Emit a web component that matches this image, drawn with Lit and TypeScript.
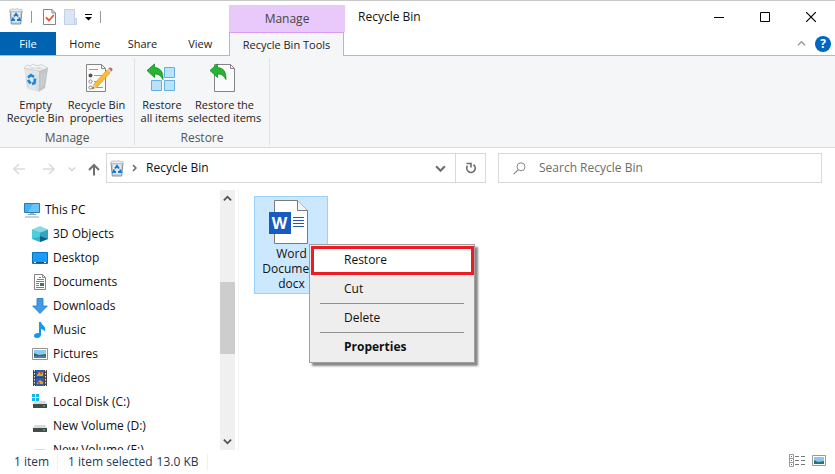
import { LitElement, html, css, svg, TemplateResult } from "lit";
import { customElement } from "lit/decorators.js";
import { classMap } from "lit/directives/class-map.js";

const icon = (w: number, h: number, body: unknown, vw = w, vh = h): TemplateResult =>
  html`<svg width=${w} height=${h} viewBox="0 0 ${vw} ${vh}" aria-hidden="true">${body}</svg>`;

const smallBin = icon(14, 17, svg`
  <path d="M1 2.500h12l-1.300 13.500H2.300z" fill="#c9cfd3" stroke="#8b9398"/>
  <path d="M1 1.500 4 .8l2 .6 2-.9 2 .8 3 .4v1.800H1z" fill="#e9ecee" stroke="#a9afb3" stroke-width=".6"/>
  <path d="M3 4.500h8V14H3z" fill="#dfe8ef"/>
  <path d="M5 8.500 7 5.800l2 2.700M10 9.500l1 2.500H8M6 12H3.200l1-2.500" fill="none" stroke="#187bd1" stroke-width="1.900"/>`);

const check = icon(13, 16, svg`
  <path d="M.5.5h8.500l3.500 3.500v11.500H.5z" fill="#fdfdfd" stroke="#858585"/>
  <path d="M9 .5V4h3.500" fill="none" stroke="#858585"/>
  <path d="m3 8.500 3 3L10.800 6" fill="none" stroke="#e8581c" stroke-width="1.800"/>`);

const folder = icon(13, 16, svg`
  <path d="M.5.5h10v9h2v6H.5z" fill="#dbe6f5" stroke="#c3d1e6"/>
  <path d="M10.500 9.500v6" stroke="#c3d1e6"/>`);

const customise = icon(7, 8, svg`<path d="M0 1.500h7" stroke="#000"/><path d="M0 4h7L3.500 7.500z" fill="#000"/>`);

const bigBin = icon(26, 30, svg`
  <path d="m1 5 15 3-.5 21L4 26z" fill="#e2e4e6"/>
  <path d="m16 8 9-3-3 20-6.500 4z" fill="#c0c4c7"/>
  <path d="M1 5 4 2l3 1 3-2 4 2 4-1.500L25 5l-9 3z" fill="#f4f5f6" stroke="#bfc3c6" stroke-width=".7"/>
  <path d="m5 5 4-1 3 1 4-1 5 1-5 1.500z" fill="#d9dcde"/>
  <path d="m3 14 2 11M14 12v15M19 10l-1 15M22 9l-2 14" stroke="#d3d6d8"/>
  <path d="m5 14.500 3-2.500 3 2" fill="none" stroke="#1687df" stroke-width="2.600"/>
  <path d="m12 15.500-.5 4.500-2.500 1M7.500 20.500 5 17" fill="none" stroke="#1687df" stroke-width="2.600"/>`);

const propertiesIcon = icon(32, 30, svg`
  <g transform="translate(4 0)">
  <path d="M1.500 1.500h15l4 4v23h-19z" fill="#fbfbfb" stroke="#858585"/>
  <path d="M16.500 1.500v4h4" fill="none" stroke="#858585"/>
  <path d="M4 6.500h9M9 12.500h8M9 18.500h6M9 24.500h9" stroke="#9b9b9b"/>
  <circle cx="5.500" cy="12.500" r="2" fill="#555"/>
  <circle cx="5.500" cy="18.500" r="1.600" fill="#fff" stroke="#888"/>
  <circle cx="5.500" cy="24.500" r="1.600" fill="#fff" stroke="#888"/>
  <path d="m7 26 2-5L22 7l3 3-13 14z" fill="#f9bd32" stroke="#dc9421" stroke-width=".7"/>
  <path d="m7 26 2-5 3 3z" fill="#eac99a"/><path d="m7 26 1-2 1 1z" fill="#333"/>
  <path d="m22 7 1.500-1.500 3 3L25 10z" fill="#cbd1d6"/>
  <path d="m23.500 5.500 1-.8q1.500-.5 2.500.5t.3 2.300l-.8 1z" fill="#d8684c"/></g>`);

const greenArrow = svg`<path d="M0 6.500 7.500 0v3.500q9 .5 8.500 12Q13 9.500 7.500 10v3.500z" fill="#25b532" stroke="#128c1d" stroke-width=".8"/>`;

const restoreAll = icon(30, 30, svg`
  <g fill="#b9e2fb" stroke="#67aee4">
    <path d="M17.500 4.500h10v10h-10zM4.500 17.500h10v10h-10zM17.500 17.500h10v10h-10z"/>
  </g><g transform="translate(0 1)">${greenArrow}</g>`);

const restoreOne = icon(30, 30, svg`
  <path d="M4.500 1.500h16l4 4v23h-20z" fill="#fbfbfb" stroke="#858585"/>
  <path d="M20.500 1.500v4h4" fill="none" stroke="#858585"/>
  <g transform="translate(0 1)">${greenArrow}</g>`);

const navArrow = (flip: boolean) => icon(13, 12, svg`
  <path d=${flip ? "M12 6H1M7 1l5 5-5 5" : "M1 6h11M6 1 1 6l5 5"} fill="none" stroke="#dcdcdc" stroke-width="1.600"/>`);
const upArrow = icon(12, 13, svg`<path d="M6 12.500V2M1 7l5-5 5 5" fill="none" stroke="#707070" stroke-width="2"/>`);
const chevron = (color: string, w: number, sw: number) =>
  icon(w, w, svg`<path d="m1 3 4 4 4-4" fill="none" stroke=${color} stroke-width=${sw}/>`, 10, 10);
const chevronRight = icon(5, 8, svg`<path d="m1 1 3 3-3 3" fill="none" stroke="#666" stroke-width="1.500"/>`);
const refresh = icon(12, 12, svg`
  <path d="M8.500 2.800A4.200 4.200 0 1 1 2.500 3.800" fill="none" stroke="#6d6d6d" stroke-width="1.700"/>
  <path d="M1.500 1.500H6v4" fill="none" stroke="#6d6d6d" stroke-width="1.600"/>`);
const magnifier = icon(13, 13, svg`
  <circle cx="8" cy="4.800" r="4" fill="none" stroke="#888"/><path d="M5 7.800.7 12.200" stroke="#888" stroke-width="1.200"/>`);

const driveBody = svg`
  <path d="M3 7h10l2 3H1z" fill="#d8dadb"/><path d="M1 10h14v4H1z" fill="#454a4b"/>
  <path d="M11 11.500h2v1h-2z" fill="#3de05c"/>`;

const treeIcons: Record<string, TemplateResult> = {
  pc: icon(16, 16, svg`<path d="M.5 1.500h15v9H.5z" fill="#43b1fa" stroke="#2a7bb5"/><path d="m9 2 6 0v8H4z" fill="#6bc5fc"/>
    <path d="M6 11h4v1.500H6z" fill="#9dbacb"/><path d="M4 12.500h8M1 15h14" stroke="#8aa2b2"/>`),
  cube: icon(16, 16, svg`<path d="M0 3.500 8 0l8 3.500-8 3z" fill="#84dbe4"/><path d="M0 3.500 8 6.500V16l-8-3z" fill="#2fb6cb"/>
    <path d="m16 3.500-8 3V16l8-3z" fill="#35a3bd"/><path d="m8 10 8 3-8 3z" fill="#0a6387"/><path d="m0 3.500 8 3v4l-8 2z" fill="#4fcddb"/>`),
  desktop: icon(16, 16, svg`<path d="M.5 2.500h15v11H.5z" fill="#1b9bf8" stroke="#0874bd"/><path d="M1 12.500h14" stroke="#065489"/>
    <path d="M2 12.500h2m8 0h2" stroke="#fff"/>`),
  documents: icon(16, 16, svg`<path d="M2.500.5h8l3 3v12h-11z" fill="#fff" stroke="#858585"/><path d="M10.500.5v3h3" fill="none" stroke="#858585"/>
    <path d="M7 3.500h2M5 5.500h7M4 7.500h8M4 9.500h3M4 11.500h3M4 13.500h8" stroke="#3b8fc9"/><path d="M8 9h4v3H8z" fill="#38795f"/>`),
  downloads: icon(16, 16, svg`<path d="M5 .5h6V8h4.300L8 15.500.7 8H5z" fill="#3f9be9" stroke="#2477b9" stroke-width=".8"/>`),
  music: icon(16, 16, svg`<path d="M7 0h2q.5 2.500 3 4.300 2 2 .5 5.200-.3-2-3.500-2.500v6q-.5 2.800-4 3-3.200 0-3-2.500.5-2.800 5-2.500z" fill="#109bf0"/>`),
  pictures: icon(16, 16, svg`<path d="M.5 2.500h15v11H.5z" fill="#fff" stroke="#929292"/><path d="M2 4h12v8H2z" fill="#8dcaf1"/>
    <path d="m2 7 5 2 7-1v2H2z" fill="#346868"/><path d="M2 10h12v2H2z" fill="#477fac"/>`),
  videos: icon(16, 16, svg`<path d="M1 0h14v16H1z" fill="#444"/><path d="M4 0h8v7H4zM4 8h8v8H4z" fill="#325ea8"/>
    <path d="M2.500 0v16M13.500 0v16" stroke="#eee" stroke-dasharray="1.500 1.500"/><path d="M5 5l2-3 2 1 2-1v4H5zM5 13l3-3 3 2v2H5z" fill="#e1a232"/><path d="M8 2h2v2H8zM6 12h2v2H6z" fill="#d35332"/>`),
  system: icon(16, 16, svg`<path d="M0 0h3v3H0zM4 0h3v3H4zM0 4h3v3H0zM4 4h3v3H4z" fill="#14b5ed"/>${driveBody}`),
  drive: icon(16, 16, driveBody),
};

const tree = [
  ["pc", "This PC"], ["cube", "3D Objects"], ["desktop", "Desktop"], ["documents", "Documents"],
  ["downloads", "Downloads"], ["music", "Music"], ["pictures", "Pictures"], ["videos", "Videos"],
  ["system", "Local Disk (C:)"], ["drive", "New Volume (D:)"], ["drive", "New Volume (E:)"],
];

const wordIcon = icon(40, 44, svg`
  <path d="M5.500.5h23l10 10v33h-33z" fill="#fff" stroke="#7b7b7b"/>
  <path d="M28.500.5v10h10" fill="#f3f3f3" stroke="#7b7b7b"/>
  <path d="M24 17.500h11M24 20.500h11M24 23.500h11M24 26.500h11" stroke="#2458a6"/>
  <path d="M0 12h22v22H0z" fill="#185abd"/>`);

@customElement("app-root")
export class AppRoot extends LitElement {
  static styles = css`
    :host {
      display: flex; flex-direction: column; height: 100vh; box-sizing: border-box; overflow: hidden;
      border-top: 1px solid #c8c8c8; background: #fff; color: #111;
      font: 12px/16px "Open Sans", "Noto Sans", sans-serif;
    }
    * { box-sizing: border-box; }
    svg { display: block; flex: none; }
    button, input { font: inherit; color: inherit; background: none; border: 0; padding: 0; margin: 0; }
    a { color: inherit; text-decoration: none; }
    header { display: grid; grid-template: 31px 24px / 229px 116px 1fr; flex: none; }
    .quick { display: flex; align-items: center; padding-left: 9px; }
    .quick button { margin-right: 8px; }
    .rule { width: 1px; height: 12px; background: #999; margin-right: 11px; }
    .context { margin-top: 4px; background: #e9c9fc; color: #444; display: grid; place-items: center; }
    .title { display: flex; align-items: center; justify-content: space-between; padding: 0 1px 0 13px; }
    .window { display: flex; }
    .window button { width: 46px; height: 31px; display: grid; place-items: center; }
    .tabs { display: grid; grid-template-columns: 56px repeat(3, 1fr); border-bottom: 1px solid #d89cf8; }
    .tabs button { color: #222; font-size: 11px; }
    .tabs .file { background: #0063b1; color: #fff; }
    .active { margin-right: 1px; background: #f5f6f7; border: 1px solid #d89cf8; border-bottom: 0; color: #222; font-size: 11px; }
    .corner { display: flex; justify-content: flex-end; align-items: center; gap: 9px; padding-right: 4px;
      margin-left: -1px; border-bottom: 1px solid #d89cf8; }
    .help { width: 16px; height: 16px; border-radius: 50%; background: #0067c0; color: #fff; font-weight: 700; line-height: 16px; }
    .ribbon { display: flex; flex: none; height: 92px; padding: 2px 0; background: #f5f6f7; border-bottom: 1px solid #d8dadc; }
    .group { display: flex; flex-direction: column; width: 135px; border-right: 1px solid #e0e1e2; }
    .commands { display: flex; padding: 5px 0 0 5px; }
    .commands button { display: flex; flex-direction: column; align-items: center; gap: 5px; color: #222;
      font-size: 11px; line-height: 13px; white-space: nowrap; width: 61px; }
    .restore { padding-left: 2px; }
    .commands .narrow { width: 50px; }
    .commands .wide { width: 75px; }
    .caption { text-align: center; margin-top: auto; line-height: 14px; color: #555; }
    .nav { display: grid; grid-template-columns: 93px 380fr 336fr; flex: none; align-items: center; height: 42px; padding: 0 13px; }
    .history { display: flex; align-items: center; gap: 16px; }
    .history .recent { margin: 0 -4px 0 -3px; }
    .address { display: flex; height: 30px; margin-top: -2px; border: 1px solid #d9d9d9; align-items: center; padding-left: 3px; }
    .address .crumb { margin-left: 9px; flex: 1; text-align: left; }
    .arrow { margin-left: 8px; }
    .reload { width: 30px; height: 28px; border-left: 1px solid #d9d9d9; margin-left: 9px; display: grid; place-items: center; }
    .search { display: flex; height: 30px; margin: -2px 0 0 12px; border: 1px solid #d9d9d9; align-items: center; padding-left: 14px; gap: 13px; }
    .search input { flex: 1; min-width: 0; outline: 0; }
    .search input::placeholder { color: #6d6d6d; opacity: 1; }
    main { display: flex; flex: 1; min-height: 0; }
    .side { display: flex; width: 239px; flex: none; border-right: 1px solid #f3f3f3; padding-right: 3px; }
    .tree { flex: 1; margin: 0; padding: 8px 0 0 24px; list-style: none; overflow: hidden; }
    .tree a { display: flex; align-items: center; gap: 5px; height: 24px; padding-left: 8px; white-space: nowrap; }
    .tree .top { padding-left: 0; }
    .scroll { width: 15px; display: flex; flex-direction: column; background: #f0f0f0; }
    .scroll button { height: 17px; display: grid; place-items: center; }
    .flip { transform: rotate(180deg); }
    .before { flex: 75; }
    .thumb { flex: 72; background: #cdcdcd; }
    .after { flex: 79; }
    .files { position: relative; flex: 1; padding: 6px 15px; }
    .tile { display: flex; flex-direction: column; align-items: center; width: 74px; height: 98px; padding: 3px 0 0 1px;
      background: #cce8ff; border: 1px solid #99d1ff; line-height: 15px; }
    .doc { position: relative; margin: 0 0 2px -6px; }
    .letter { position: absolute; left: 0; top: 12px; width: 22px; line-height: 22px; color: #fff; font-size: 16px; font-weight: 700; text-align: center; }
    .menu { position: absolute; left: 70px; top: 54px; width: 166px; padding: 1px 0 0 1px; background: #eee;
      border: 1px solid #a0a0a0; box-shadow: 3px 3px 2px #888; }
    .menu button { display: block; width: 100%; height: 29px; padding: 0 0 2px 33px; text-align: left; }
    .menu .hot { background: #fff; border: 3px solid #ed1c24; padding-left: 30px; }
    .menu .strong { font-weight: 700; }
    .menu hr { border: 0; height: 1px; background: #919191; margin: -1px 10px 0 9px; }
    footer { display: flex; flex: none; height: 24px; align-items: center; padding: 0 9px 0 14px; color: #1e395b; white-space: nowrap; }
    footer .count { width: 44px; border-right: 1px solid #f0f0f0; }
    footer .selected { margin-left: 10px; }
    footer .size { margin-left: 4px; padding-right: 8px; border-right: 1px solid #f0f0f0; }
    .views { display: flex; align-items: center; gap: 7px; margin: 0 0 3px auto; }
  `;

  render() {
    return html`
      <header>
        <div class="quick">
          <button aria-label="Recycle Bin">${smallBin}</button><i class="rule"></i>
          <button aria-label="Properties">${check}</button>
          <button aria-label="New folder">${folder}</button>
          <button aria-label="Customise toolbar">${customise}</button><i class="rule"></i>
        </div>
        <div class="context">Manage</div>
        <div class="title"><span>Recycle Bin</span>
          <div class="window">
            <button aria-label="Minimise">${icon(10, 10, svg`<path d="M0 5.500h10" stroke="#000"/>`)}</button>
            <button aria-label="Maximise">${icon(10, 10, svg`<path d="M.5.5h9v9h-9z" fill="none" stroke="#000"/>`)}</button>
            <button aria-label="Close">${icon(10, 10, svg`<path d="m0 0 10 10M10 0 0 10" stroke="#000" stroke-width="1.200"/>`)}</button>
          </div>
        </div>
        <nav class="tabs"><button class="file">File</button><button>Home</button><button>Share</button><button>View</button></nav>
        <button class="active">Recycle Bin Tools</button>
        <div class="corner">
          <button class="flip" aria-label="Collapse ribbon">${chevron("#999", 9, 1.5)}</button>
          <button class="help" aria-label="Help">?</button>
        </div>
      </header>
      <section class="ribbon">
        <div class="group">
          <div class="commands">
            <button>${bigBin}<span>Empty<br>Recycle Bin</span></button>
            <button>${propertiesIcon}<span>Recycle Bin<br>properties</span></button>
          </div>
          <div class="caption">Manage</div>
        </div>
        <div class="group">
          <div class="commands restore">
            <button class="narrow">${restoreAll}<span>Restore<br>all items</span></button>
            <button class="wide">${restoreOne}<span>Restore the<br>selected items</span></button>
          </div>
          <div class="caption">Restore</div>
        </div>
      </section>
      <section class="nav">
        <div class="history">
          <button aria-label="Back">${navArrow(false)}</button>
          <button aria-label="Forward">${navArrow(true)}</button>
          <button class="recent" aria-label="Recent locations">${chevron("#d4d4d4", 8, 1.8)}</button>
          <button aria-label="Up">${upArrow}</button>
        </div>
        <div class="address">
          ${smallBin}<span class="arrow">${chevronRight}</span>
          <button class="crumb">Recycle Bin</button>
          <button aria-label="Previous locations">${chevron("#707070", 11, 2)}</button>
          <button class="reload" aria-label="Refresh">${refresh}</button>
        </div>
        <label class="search">${magnifier}<input type="text" placeholder="Search Recycle Bin" aria-label="Search Recycle Bin"></label>
      </section>
      <main>
        <aside class="side">
          <ul class="tree">
            ${tree.map(([key, label], i) => html`<li><a href="#" class=${classMap({ top: i === 0 })}>${treeIcons[key]}<span>${label}</span></a></li>`)}
          </ul>
          <div class="scroll">
            <button class="flip" aria-label="Scroll up">${chevron("#505050", 9, 2)}</button>
            <div class="before"></div><div class="thumb"></div><div class="after"></div>
            <button aria-label="Scroll down">${chevron("#505050", 9, 2)}</button>
          </div>
        </aside>
        <section class="files">
          <button class="tile"><span class="doc">${wordIcon}<b class="letter">W</b></span><span>Word<br>Document<br>docx</span></button>
          <div class="menu" role="menu">
            <button class="hot" role="menuitem">Restore</button>
            <button role="menuitem">Cut</button><hr>
            <button role="menuitem">Delete</button><hr>
            <button role="menuitem" class="strong">Properties</button>
          </div>
        </section>
      </main>
      <footer>
        <span class="count">1 item</span><span class="selected">1 item selected</span><span class="size">13.0 KB</span>
        <div class="views">
          <button aria-label="Details view">${icon(16, 13, svg`<path d="M.5.5h4v12h-4zM.5 4.500h4M.5 8.500h4" fill="#fff" stroke="#999"/>
            <path d="M2 2.500h1M2 6.500h1" stroke="#2683c6"/><path d="M2 10.500h1" stroke="#d33"/>
            <path d="M6 2.500h4m2 0h4M6 6.500h4m2 0h4M6 10.500h4m2 0h4" stroke="#777"/>`)}</button>
          <button aria-label="Large icons view">${icon(14, 11, svg`<path d="M.5.5h13v10H.5z" fill="#fff" stroke="#999"/>
            <path d="M2 2h10v7H2z" fill="#8bc7ef"/><path d="m2 5 4 2 6-1v3H2z" fill="#346f79"/>`)}</button>
        </div>
      </footer>`;
  }
}
